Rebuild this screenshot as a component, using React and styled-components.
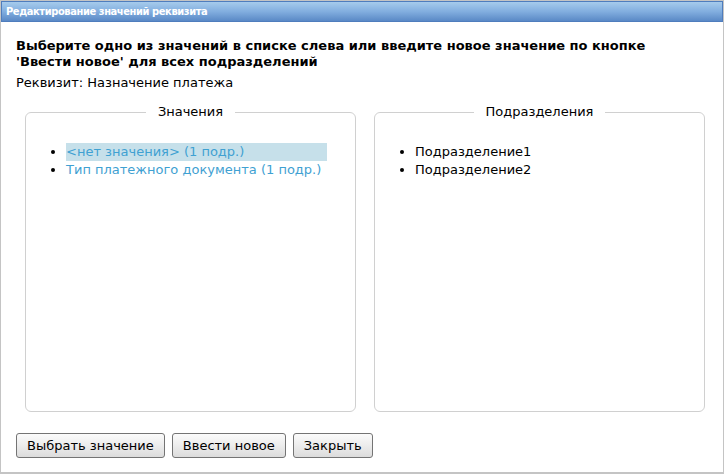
import React from 'react';
import styled, { createGlobalStyle } from 'styled-components';

const GlobalStyle = createGlobalStyle`
  html, body {
    margin: 0;
    padding: 0;
    background: #fff;
  }
  body {
    font-family: "DejaVu Sans", Verdana, sans-serif;
  }
`;

const Window = styled.div`
  width: 724px;
  height: 474px;
  box-sizing: border-box;
  border: 1px solid #c4c4c4;
  border-bottom-width: 2px;
  display: flex;
  flex-direction: column;
  background: #fff;
`;

const TitleBar = styled.div`
  height: 21px;
  box-sizing: border-box;
  border: 1px solid #4f7dbd;
  background: linear-gradient(to bottom, #a6cbec 0%, #82aedf 50%, #5a89c6 100%);
  color: #fff;
  font-family: "DejaVu Sans Condensed", "DejaVu Sans", sans-serif;
  font-size: 11px;
  font-weight: bold;
  letter-spacing: -0.4px;
  line-height: 19px;
  padding-left: 4px;
  white-space: nowrap;
`;

const Body = styled.div`
  flex: 1;
  display: flex;
  flex-direction: column;
  padding: 16px 17px 14px 15px;
  color: #000;
  font-size: 13px;
`;

const Heading = styled.div`
  font-weight: bold;
  line-height: 16px;
`;

const Caption = styled.div`
  margin-top: 5px;
  line-height: 16px;
`;

const Columns = styled.div`
  flex: 1;
  display: grid;
  grid-template-columns: 331px 331px;
  gap: 18px;
  margin: 13px 0 0 9px;
`;

const Group = styled.fieldset`
  margin: 0;
  padding: 0;
  border: 1px solid #d0d0d0;
  border-radius: 6px;
  min-width: 0;
`;

const Legend = styled.legend`
  margin: 0 auto;
  padding: 0 12px;
  font-size: 13px;
  line-height: 16px;
`;

const List = styled.ul`
  margin: 23px 28px 0 0;
  padding: 0 0 0 40px;
  list-style: disc;
`;

const Item = styled.li`
  line-height: 18px;
  color: #000;
  background: ${(p) => (p.$active ? '#c6e0ea' : 'transparent')};
`;

const ValueLink = styled.span`
  color: #3fa1d2;
  cursor: pointer;
`;

const Footer = styled.div`
  display: flex;
  gap: 7px;
  margin-top: 21px;
`;

const Button = styled.button`
  height: 25px;
  padding: 0 10px;
  font-family: "DejaVu Sans", Verdana, sans-serif;
  font-size: 13px;
  color: #000;
  border: 1px solid #747474;
  border-radius: 3px;
  background: linear-gradient(to bottom, #fbfbfb 0%, #ececec 50%, #dcdcdc 100%);
  cursor: pointer;
`;

const values = [
  { text: '<нет значения> (1 подр.)', active: true },
  { text: 'Тип платежного документа (1 подр.)', active: false },
];

const units = ['Подразделение1', 'Подразделение2'];

export default function App() {
  return (
    <>
      <GlobalStyle />
      <Window>
        <TitleBar>Редактирование значений реквизита</TitleBar>
        <Body>
          <Heading>
            Выберите одно из значений в списке слева или введите новое значение по кнопке
            <br />
            'Ввести новое' для всех подразделений
          </Heading>
          <Caption>Реквизит: Назначение платежа</Caption>
          <Columns>
            <Group>
              <Legend>Значения</Legend>
              <List>
                {values.map((v) => (
                  <Item key={v.text} $active={v.active}>
                    <ValueLink>{v.text}</ValueLink>
                  </Item>
                ))}
              </List>
            </Group>
            <Group>
              <Legend>Подразделения</Legend>
              <List>
                {units.map((u) => (
                  <Item key={u}>{u}</Item>
                ))}
              </List>
            </Group>
          </Columns>
          <Footer>
            <Button>Выбрать значение</Button>
            <Button>Ввести новое</Button>
            <Button>Закрыть</Button>
          </Footer>
        </Body>
      </Window>
    </>
  );
}
